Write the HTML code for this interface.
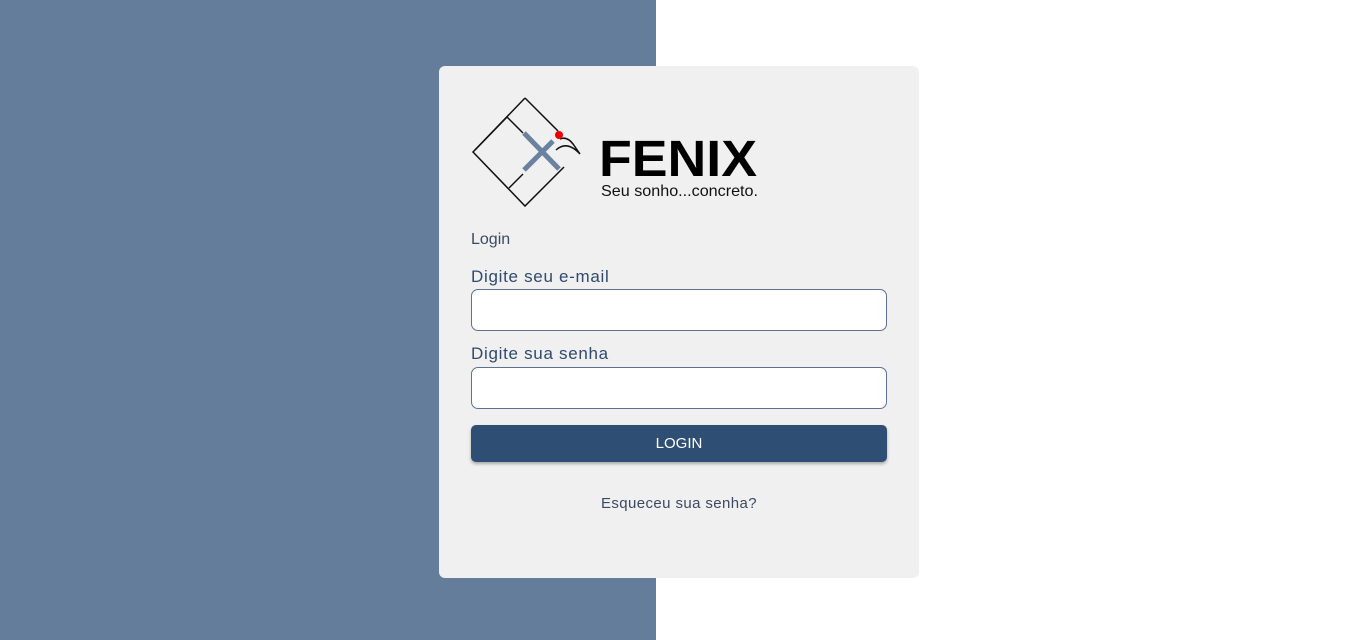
<!DOCTYPE html>
<html><head><meta charset="utf-8"><style>
*{box-sizing:border-box;margin:0;padding:0}
body{width:1358px;height:640px;position:relative;background:#fff;font-family:"Liberation Sans",sans-serif;overflow:hidden}
.left{position:absolute;left:0;top:0;width:656px;height:640px;background:#647d9b}
.card{position:absolute;left:439px;top:66px;width:480px;height:512px;background:#f0f0f0;border-radius:6px}
.t{position:absolute;color:#2f4a6e}
.inp{position:absolute;left:32px;width:416px;height:42px;background:#fff;border:1px solid #5f7090;border-radius:7px}
.btn{position:absolute;left:32px;top:359px;width:416px;height:37px;background:#2f4e73;border-radius:5px;color:#fff;font-size:15px;text-align:center;line-height:37px;box-shadow:0 2px 3px rgba(0,0,0,.3)}
</style></head><body>
<div class="left"></div>
<div class="card">
<svg style="position:absolute;left:0;top:0" width="480" height="150">
<g fill="none" stroke="#111" stroke-width="1.5">
<path d="M86 32 L34 86 L86 140 L125 101"/>
<path d="M86 32 L119 65"/>
<path d="M68 51 L36 84 M68 51 L84 67 M70 122 L84 108"/>
<path d="M117 84 Q128 74 141 88 L134 78 Q128 70 121 73"/>
</g>
<g stroke="#6a82a0" stroke-width="5" stroke-linecap="butt">
<path d="M85 67 L120 103"/>
<path d="M85 104 L114 75"/>
</g>
<circle cx="120" cy="69" r="4" fill="#e00"/>
<text x="160" y="110" font-family="Liberation Sans" font-weight="bold" font-size="51" fill="#000" textLength="158" lengthAdjust="spacingAndGlyphs">FENIX</text>
<text x="162" y="130" font-family="Liberation Sans" font-size="16" fill="#111" textLength="157" lengthAdjust="spacingAndGlyphs">Seu sonho...concreto.</text>
</svg>
<div class="t" style="left:32px;top:165px;font-size:16px;color:#3b4a63">Login</div>
<div class="t" style="left:32px;top:201px;font-size:17px;letter-spacing:.7px">Digite seu e-mail</div>
<div class="inp" style="top:223px"></div>
<div class="t" style="left:32px;top:278px;font-size:17px;letter-spacing:.7px">Digite sua senha</div>
<div class="inp" style="top:301px"></div>
<div class="btn">LOGIN</div>
<div class="t" style="left:0;width:480px;text-align:center;top:429px;font-size:15px;color:#3b4a63;letter-spacing:.4px">Esqueceu sua senha?</div>
</div>
</body></html>
